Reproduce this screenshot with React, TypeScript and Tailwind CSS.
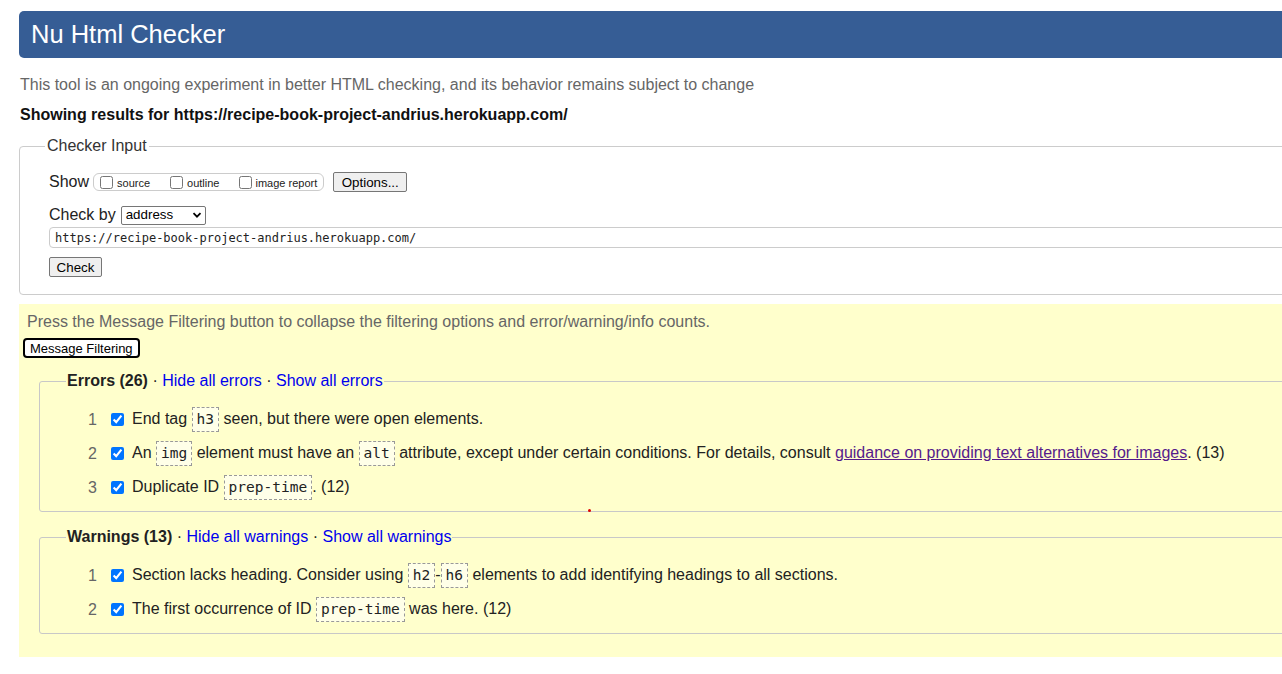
import { ReactNode } from "react";

const sans = "font-['Liberation_Sans',Arial,sans-serif]";

function Code({ children }: { children: ReactNode }) {
  return (
    <code className="inline-block border border-dashed border-[#999] bg-[#ffffe8] px-[4px] py-[3px] font-['DejaVu_Sans_Mono',monospace] text-[14.5px] leading-[17px] text-[#222]">
      {children}
    </code>
  );
}

function Row({ n, children }: { n: number; children: ReactNode }) {
  return (
    <li className="flex h-[25px] items-center whitespace-nowrap">
      <span className="w-[57px] text-right text-[#666]">{n}</span>
      <input type="checkbox" defaultChecked className="ml-[14px] h-[13px] w-[13px]" />
      <span className="ml-[8px] text-[#222]">{children}</span>
    </li>
  );
}

function Group({
  label,
  count,
  kind,
  children,
}: {
  label: string;
  count: number;
  kind: string;
  children: ReactNode;
}) {
  return (
    <fieldset className="ml-[20px] rounded-[3px] border border-[#c8c8c8] pb-[11px] pl-[27px]">
      <legend className="-ml-[1px] px-[1px] leading-[18px]">
        <span className="font-bold text-[#222]">
          {label} ({count})
        </span>
        <span className="text-[#222]"> · </span>
        <a className="text-[#0000ee]">Hide all {kind}</a>
        <span className="text-[#222]"> · </span>
        <a className="text-[#0000ee]">Show all {kind}</a>
      </legend>
      <ul className="-ml-[27px] flex flex-col gap-[9px] pt-[17px]">{children}</ul>
    </fieldset>
  );
}

export default function App() {
  return (
    <div className={`relative h-[674px] w-[1282px] overflow-hidden bg-white text-[16px] ${sans}`}>
      <div className="w-[1330px] pl-[19px]">
        {/* Title bar */}
        <div className="mt-[11px] flex h-[47px] items-center rounded-[5px] bg-[#365d95] pl-[12px]">
          <h1 className="text-[25.5px] leading-none text-white">Nu Html Checker</h1>
        </div>

        <p className="mt-[18px] pl-[1px] leading-[18px] text-[#666]">
          This tool is an ongoing experiment in better HTML checking, and its behavior remains subject to change
        </p>
        <p className="mt-[12px] pl-[1px] font-bold leading-[18px] text-[#111]">
          Showing results for https://recipe-book-project-andrius.herokuapp.com/
        </p>

        {/* Checker input */}
        <fieldset className="mt-[13px] rounded-[4px] border border-[#ccc] pb-[17px] pl-[29px] pt-[17px]">
          <legend className="-ml-[4px] px-[2px] leading-[18px] text-[#333]">Checker Input</legend>

          <div className="flex h-[20px] items-center">
            <span className="text-[#222]">Show</span>
            <div className="ml-[4px] flex h-[18px] items-center rounded-[6px] border border-[#ccc] pl-[6px] pr-[6px] text-[11px] text-[#222]">
              <input type="checkbox" className="h-[13px] w-[13px]" />
              <span className="ml-[4px] mt-[2px]">source</span>
              <input type="checkbox" className="ml-[20px] h-[13px] w-[13px]" />
              <span className="ml-[4px] mt-[2px]">outline</span>
              <input type="checkbox" className="ml-[20px] h-[13px] w-[13px]" />
              <span className="ml-[3px] mt-[2px]">image report</span>
            </div>
            <button className="ml-[9px] h-[20px] w-[74px] rounded-[2px] border border-[#767676] bg-[#efefef] text-[13.33px] text-black">
              Options...
            </button>
          </div>

          <div className="mt-[13px] flex h-[20px] items-center">
            <span className="text-[#222]">Check by</span>
            <div className="ml-[5px] flex h-[19px] w-[85px] items-center justify-between rounded-[2px] border border-[#767676] bg-white pl-[4px] pr-[3px] text-[13.33px] text-black">
              <span>address</span>
              <svg width="10" height="10" viewBox="0 0 10 10">
                <path d="M1.5 3.2 L5 6.7 L8.5 3.2" fill="none" stroke="#000" strokeWidth="1.8" />
              </svg>
            </div>
          </div>

          <input
            readOnly
            value="https://recipe-book-project-andrius.herokuapp.com/"
            className="mt-[2px] block h-[21px] w-[1300px] rounded-[4px] border border-[#ccc] pl-[5px] font-['DejaVu_Sans_Mono',monospace] text-[12px] text-[#222]"
          />

          <button className="mt-[9px] block h-[20px] w-[53px] rounded-[2px] border border-[#767676] bg-[#efefef] text-[13.33px] text-black">
            Check
          </button>
        </fieldset>

        {/* Results */}
        <div className="mt-[9px] bg-[#ffffcc] pb-[23px] pt-[9px]">
          <p className="pl-[8px] leading-[18px] text-[#666]">
            Press the Message Filtering button to collapse the filtering options and error/warning/info counts.
          </p>
          <button className="ml-[4px] mt-[7px] block h-[20px] rounded-[4px] border-2 border-black bg-white px-[5px] text-[13px] leading-none text-black">
            Message Filtering
          </button>

          <div className="mt-[14px]">
            <Group label="Errors" count={26} kind="errors">
              <Row n={1}>
                End tag <Code>h3</Code> seen, but there were open elements.
              </Row>
              <Row n={2}>
                An <Code>img</Code> element must have an <Code>alt</Code> attribute, except under certain conditions. For
                details, consult{" "}
                <a className="text-[#551a8b] underline">guidance on providing text alternatives for images</a>. (13)
              </Row>
              <Row n={3}>
                Duplicate ID <Code>prep-time</Code>. (12)
              </Row>
            </Group>
          </div>

          <div className="mt-[16px]">
            <Group label="Warnings" count={13} kind="warnings">
              <Row n={1}>
                Section lacks heading. Consider using <Code>h2</Code>-<Code>h6</Code> elements to add identifying
                headings to all sections.
              </Row>
              <Row n={2}>
                The first occurrence of ID <Code>prep-time</Code> was here. (12)
              </Row>
            </Group>
          </div>
        </div>
      </div>

      {/* stray red dot */}
      <span className="absolute left-[588px] top-[509px] h-[3px] w-[3px] rounded-full bg-[#e00000]" />
    </div>
  );
}
